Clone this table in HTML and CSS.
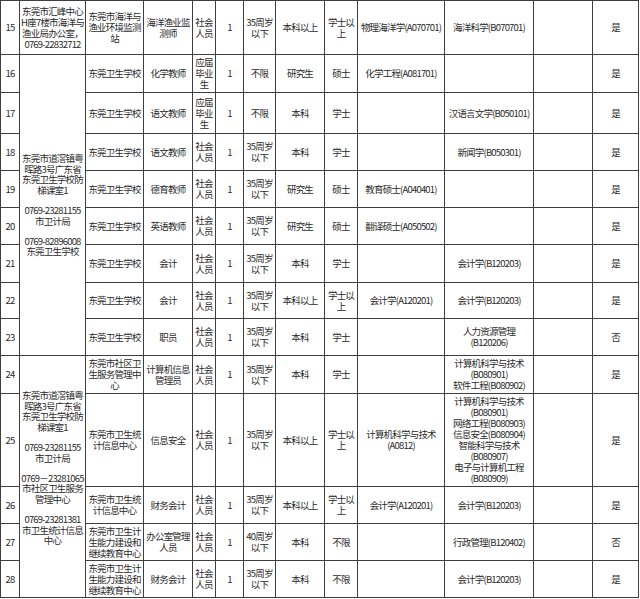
FILE: index.html
```html
<!DOCTYPE html>
<html lang="zh-CN">
<head>
<meta charset="utf-8">
<title>岗位表</title>
<link rel="stylesheet" href="styles.css">
</head>
<body>
<table class="tbl">
  <colgroup>
    <col class="c-no"><col class="c-addr"><col class="c-unit"><col class="c-pos"><col class="c-type">
    <col class="c-num"><col class="c-age"><col class="c-edu"><col class="c-deg"><col class="c-m1">
    <col class="c-m2"><col class="c-m3"><col class="c-yes">
  </colgroup>
  <tbody>
    <tr class="r54">
      <td>15</td>
      <td>东莞市汇峰中心<br>H座7楼市海洋与<br>渔业局办公室，<br>0769-22832712</td>
      <td>东莞市海洋与<br>渔业环境监测<br>站</td>
      <td>海洋渔业监<br>测师</td>
      <td>社会<br>人员</td>
      <td>1</td>
      <td>35周岁<br>以下</td>
      <td>本科以上</td>
      <td>学士以<br>上</td>
      <td>物理海洋学(A070701)</td>
      <td>海洋科学(B070701)</td>
      <td></td>
      <td>是</td>
    </tr>
    <tr class="r38">
      <td>16</td>
      <td rowspan="8" class="addr">
        <div>东莞市道滘镇粤<br>晖路3号广东省<br>东莞卫生学校防<br>梯课室1</div>
        <div class="gap">0769-23281155<br>市卫计局</div>
        <div class="gap">0769-82896008<br>东莞卫生学校</div>
      </td>
      <td>东莞卫生学校</td>
      <td>化学教师</td>
      <td>应届<br>毕业<br>生</td>
      <td>1</td>
      <td>不限</td>
      <td>研究生</td>
      <td>硕士</td>
      <td>化学工程(A081701)</td>
      <td></td>
      <td></td>
      <td>是</td>
    </tr>
    <tr class="r41">
      <td>17</td>
      <td>东莞卫生学校</td>
      <td>语文教师</td>
      <td>应届<br>毕业<br>生</td>
      <td>1</td>
      <td>不限</td>
      <td>本科</td>
      <td>学士</td>
      <td></td>
      <td>汉语言文学(B050101)</td>
      <td></td>
      <td>是</td>
    </tr>
    <tr class="r37">
      <td>18</td>
      <td>东莞卫生学校</td>
      <td>语文教师</td>
      <td>社会<br>人员</td>
      <td>1</td>
      <td>35周岁<br>以下</td>
      <td>本科</td>
      <td>学士</td>
      <td></td>
      <td>新闻学(B050301)</td>
      <td></td>
      <td>是</td>
    </tr>
    <tr class="r37">
      <td>19</td>
      <td>东莞卫生学校</td>
      <td>德育教师</td>
      <td>社会<br>人员</td>
      <td>1</td>
      <td>35周岁<br>以下</td>
      <td>研究生</td>
      <td>硕士</td>
      <td>教育硕士(A040401)</td>
      <td></td>
      <td></td>
      <td>是</td>
    </tr>
    <tr class="r37">
      <td>20</td>
      <td>东莞卫生学校</td>
      <td>英语教师</td>
      <td>社会<br>人员</td>
      <td>1</td>
      <td>35周岁<br>以下</td>
      <td>研究生</td>
      <td>硕士</td>
      <td>翻译硕士(A050502)</td>
      <td></td>
      <td></td>
      <td>是</td>
    </tr>
    <tr class="r38">
      <td>21</td>
      <td>东莞卫生学校</td>
      <td>会计</td>
      <td>社会<br>人员</td>
      <td>1</td>
      <td>35周岁<br>以下</td>
      <td>本科</td>
      <td>学士</td>
      <td></td>
      <td>会计学(B120203)</td>
      <td></td>
      <td>是</td>
    </tr>
    <tr class="r36">
      <td>22</td>
      <td>东莞卫生学校</td>
      <td>会计</td>
      <td>社会<br>人员</td>
      <td>1</td>
      <td>35周岁<br>以下</td>
      <td>本科以上</td>
      <td>学士以<br>上</td>
      <td>会计学(A120201)</td>
      <td>会计学(B120203)</td>
      <td></td>
      <td>是</td>
    </tr>
    <tr class="r37">
      <td>23</td>
      <td>东莞卫生学校</td>
      <td>职员</td>
      <td>社会<br>人员</td>
      <td>1</td>
      <td>35周岁<br>以下</td>
      <td>本科</td>
      <td>学士</td>
      <td></td>
      <td>人力资源管理<br>(B120206)</td>
      <td></td>
      <td>否</td>
    </tr>
    <tr class="r38">
      <td>24</td>
      <td rowspan="5" class="addr addr2">
        <div>东莞市道滘镇粤<br>晖路3号广东省<br>东莞卫生学校防<br>梯课室1</div>
        <div class="gap">0769-23281155<br>市卫计局</div>
        <div class="gap">0769－23281065<br>市社区卫生服务<br>管理中心</div>
        <div class="gap">0769-23281381<br>市卫生统计信息<br>中心</div>
      </td>
      <td>东莞市社区卫<br>生服务管理中<br>心</td>
      <td>计算机信息<br>管理员</td>
      <td>社会<br>人员</td>
      <td>1</td>
      <td>35周岁<br>以下</td>
      <td>本科</td>
      <td>学士</td>
      <td></td>
      <td>计算机科学与技术<br>(B080901)<br>软件工程(B080902)</td>
      <td></td>
      <td>是</td>
    </tr>
    <tr class="r93">
      <td>25</td>
      <td>东莞市卫生统<br>计信息中心</td>
      <td>信息安全</td>
      <td>社会<br>人员</td>
      <td>1</td>
      <td>35周岁<br>以下</td>
      <td>本科以上</td>
      <td>学士以<br>上</td>
      <td>计算机科学与技术<br>(A0812)</td>
      <td>计算机科学与技术<br>(B080901)<br>网络工程(B080903)<br>信息安全(B080904)<br>智能科学与技术<br>(B080907)<br>电子与计算机工程<br>(B080909)</td>
      <td></td>
      <td>是</td>
    </tr>
    <tr class="r37">
      <td>26</td>
      <td>东莞市卫生统<br>计信息中心</td>
      <td>财务会计</td>
      <td>社会<br>人员</td>
      <td>1</td>
      <td>35周岁<br>以下</td>
      <td>本科以上</td>
      <td>学士以<br>上</td>
      <td>会计学(A120201)</td>
      <td>会计学(B120203)</td>
      <td></td>
      <td>是</td>
    </tr>
    <tr class="r37">
      <td>27</td>
      <td>东莞市卫生计<br>生能力建设和<br>继续教育中心</td>
      <td>办公室管理<br>人员</td>
      <td>社会<br>人员</td>
      <td>1</td>
      <td>40周岁<br>以下</td>
      <td>本科</td>
      <td>不限</td>
      <td></td>
      <td>行政管理(B120402)</td>
      <td></td>
      <td>否</td>
    </tr>
    <tr class="r37">
      <td>28</td>
      <td>东莞市卫生计<br>生能力建设和<br>继续教育中心</td>
      <td>财务会计</td>
      <td>社会<br>人员</td>
      <td>1</td>
      <td>35周岁<br>以下</td>
      <td>本科</td>
      <td>不限</td>
      <td></td>
      <td>会计学(B120203)</td>
      <td></td>
      <td>是</td>
    </tr>
  </tbody>
</table>
</body>
</html>
```

FILE: styles.css
```css
html, body {
  margin: 0;
  padding: 0;
  background: #ffffff;
}

.tbl {
  border-collapse: collapse;
  table-layout: fixed;
  width: 639px;
  font-family: "Noto Sans CJK SC", "Liberation Sans", sans-serif;
  font-size: 9.5px;
  letter-spacing: -0.8px;
  line-height: 11px;
  color: #2a2a2a;
}

.tbl td {
  border: 1px solid #3f3f3f;
  padding: 0;
  text-align: center;
  vertical-align: middle;
  white-space: nowrap;
  overflow: hidden;
}

.c-no { width: 19px; }
.c-addr { width: 66px; }
.c-unit { width: 58px; }
.c-pos { width: 49px; }
.c-type { width: 23px; }
.c-num { width: 28px; }
.c-age { width: 32px; }
.c-edu { width: 49px; }
.c-deg { width: 33px; }
.c-m1 { width: 87px; }
.c-m2 { width: 89px; }
.c-m3 { width: 59px; }
.c-yes { width: 46px; }

.r54 { height: 54px; }
.r41 { height: 41px; }
.r38 { height: 38px; }
.r37 { height: 37px; }
.r36 { height: 36px; }
.r93 { height: 93px; }

.addr {
  line-height: 10.8px;
}

.addr .gap {
  margin-top: 9px;
}

.addr2 {
  padding-bottom: 17px !important;
}
```
